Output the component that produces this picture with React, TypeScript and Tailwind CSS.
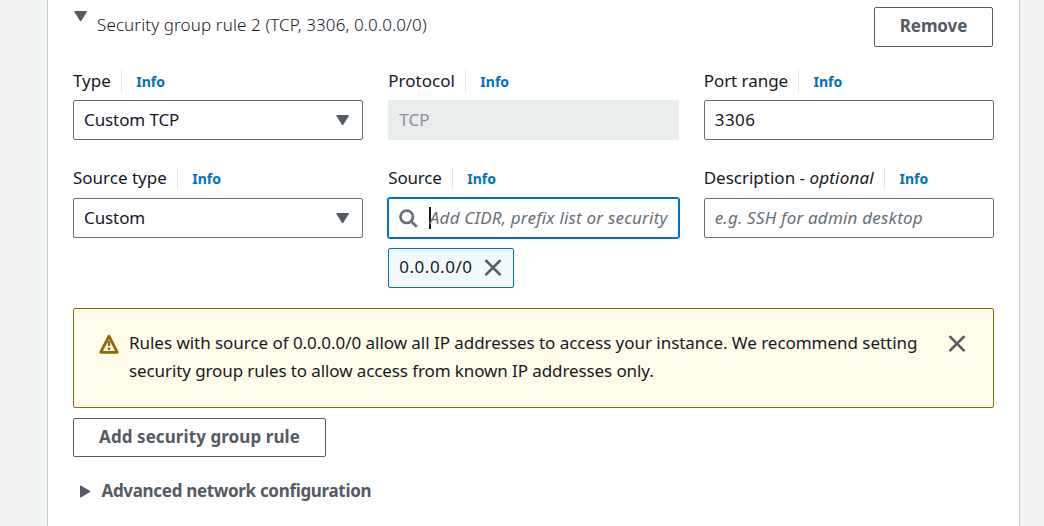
import type { ReactNode } from "react";

function Label({ children, className = "" }: { children: ReactNode; className?: string }) {
  return (
    <div className="flex h-[22px] items-center">
      <span className={`whitespace-pre text-[17px] leading-[22px] ${className}`}>{children}</span>
      <span className="ml-[10px] h-[22px] w-px bg-[#e3e7e8]" />
      <a className="ml-[14.5px] pt-px text-[14px] leading-[22px] font-bold text-[#0073bb]">Info</a>
    </div>
  );
}

function Caret() {
  return (
    <svg width="13" height="11" viewBox="0 0 13 11" fill="#545b64">
      <path d="M.9 0h11.4q1 0 .5.9L7.3 9.8q-.7.9-1.4 0L.4.9Q-.1 0 .9 0Z" />
    </svg>
  );
}

function Close({ className = "" }: { className?: string }) {
  return (
    <svg className={className} width="18" height="18" viewBox="0 0 18 18" fill="none" stroke="#545b64" strokeWidth="2.6">
      <path d="M1.5 1.2 16.5 16.2M16.5 1.2 1.5 16.2" />
    </svg>
  );
}

function SelectBox({ value }: { value: string }) {
  return (
    <div className="flex h-10 items-center justify-between rounded-[2px] border border-[#687078] pr-[13px] pl-[10px]">
      <span className="pb-px text-[17px] tracking-[-0.1px]">{value}</span>
      <Caret />
    </div>
  );
}

export default function App() {
  return (
    <div className="flex h-[526px] justify-center overflow-hidden bg-[#f2f3f3] pl-[23px] font-['Noto_Sans',sans-serif] text-[17px] text-[#16191f]">
      <main className="h-full w-[973px] border-x border-[#c3c8ca] bg-white px-[25px] pt-[7px]">
        <header className="flex items-start justify-between pr-px">
          <div className="flex">
            <span className="mt-1 ml-px"><Caret /></span>
            <h2 className="ml-[10px] pt-[6px] text-[17px] leading-6 font-light tracking-[0.12px]">
              Security group rule 2 (TCP, 3306, 0.0.0.0/0)
            </h2>
          </div>
          <button className="h-10 w-[119px] rounded-[2px] border border-[#545b64] pb-0.5 font-bold tracking-[-0.1px] text-[#545b64]">
            Remove
          </button>
        </header>

        <section className="mt-[23px] grid grid-cols-3 gap-x-[25px]">
          <div className="flex flex-col gap-2">
            <Label>Type</Label>
            <SelectBox value="Custom TCP" />
          </div>
          <div className="flex flex-col gap-2">
            <Label>Protocol</Label>
            <div className="flex h-10 items-center rounded-[2px] bg-[#e9eded] px-[11px] text-[#879596]">TCP</div>
          </div>
          <div className="flex flex-col gap-2">
            <Label className="tracking-[-0.05px]">Port range</Label>
            <div className="flex h-10 items-center rounded-[2px] border border-[#687078] px-[10px] tracking-[0.5px]">3306</div>
          </div>
        </section>

        <section className="mt-[27px] grid grid-cols-3 gap-x-[25px]">
          <div className="flex flex-col gap-[9px]">
            <Label>Source type</Label>
            <SelectBox value="Custom" />
          </div>
          <div className="flex flex-col gap-[9px]">
            <Label className="tracking-[-0.2px]">Source</Label>
            <div className="flex h-10 items-center rounded-[2px] border border-[#0073bb] pl-[10px] shadow-[0_0_0_1px_#0073bb]">
              <svg width="19" height="19" viewBox="0 0 19 19" fill="none" stroke="#687078" strokeWidth="2.7">
                <circle cx="7.7" cy="7.8" r="6.2" />
                <path d="m12 12.2 5.9 5.6" />
              </svg>
              <span className="ml-[11px] h-[22px] w-[2px] shrink-0 bg-[#16191f]" />
              <span className="-ml-[1.5px] whitespace-nowrap tracking-[0.2px] text-[#687078] italic">
                Add CIDR, prefix list or security
              </span>
            </div>
            <div className="mt-px flex h-10 w-[126px] items-center justify-between rounded-[2px] border border-[#0073bb] bg-[#f1faff] pr-[11px] pl-[10px]">
              <span className="pb-0.5 tracking-[0.5px]">0.0.0.0/0</span>
              <Close />
            </div>
          </div>
          <div className="flex flex-col gap-[9px]">
            <Label>Description - <em className="tracking-[0.2px]">optional</em></Label>
            <div className="flex h-10 items-center rounded-[2px] border border-[#687078] px-[10px] tracking-[0.2px] text-[#687078] italic">
              e.g. SSH for admin desktop
            </div>
          </div>
        </section>

        <aside className="mt-5 flex h-[100px] items-start rounded-[2px] border border-[#906806] bg-[#fffce9] pt-5 pl-[25px]">
          <svg className="mt-[5px] shrink-0" width="20" height="20" viewBox="0 0 20 20" fill="none" stroke="#906806">
            <path d="M10 2.2 18.3 18.3H1.7Z" strokeWidth="2.8" strokeLinejoin="round" />
            <path d="M10 7v5M10 13.6v2.4" strokeWidth="2.5" />
          </svg>
          <p className="ml-[10px] w-[819px] leading-7 tracking-[-0.04px]">
            Rules with source of 0.0.0.0/0 allow all IP addresses to access your instance. We recommend setting
            <br />
            <span className="tracking-[-0.1px]">security group rules to allow access from known IP addresses only.</span>
          </p>
          <Close className="mt-[6px] shrink-0" />
        </aside>

        <button className="mt-[10px] block h-[39px] w-[253px] rounded-[2px] border border-[#545b64] pb-0.5 font-bold tracking-[0.08px] text-[#545b64]">
          Add security group rule
        </button>

        <div className="mt-[22px] flex h-6 items-center text-[#545b64]">
          <svg className="ml-[7px]" width="11" height="13" viewBox="0 0 11 13" fill="#545b64">
            <path d="M0 1Q0 .1.8.5L10.1 5.9q.8.6 0 1.2L.8 12.5Q0 12.9 0 12Z" />
          </svg>
          <span className="ml-[10.5px] font-bold tracking-[-0.32px]">Advanced network configuration</span>
        </div>
      </main>
    </div>
  );
}
